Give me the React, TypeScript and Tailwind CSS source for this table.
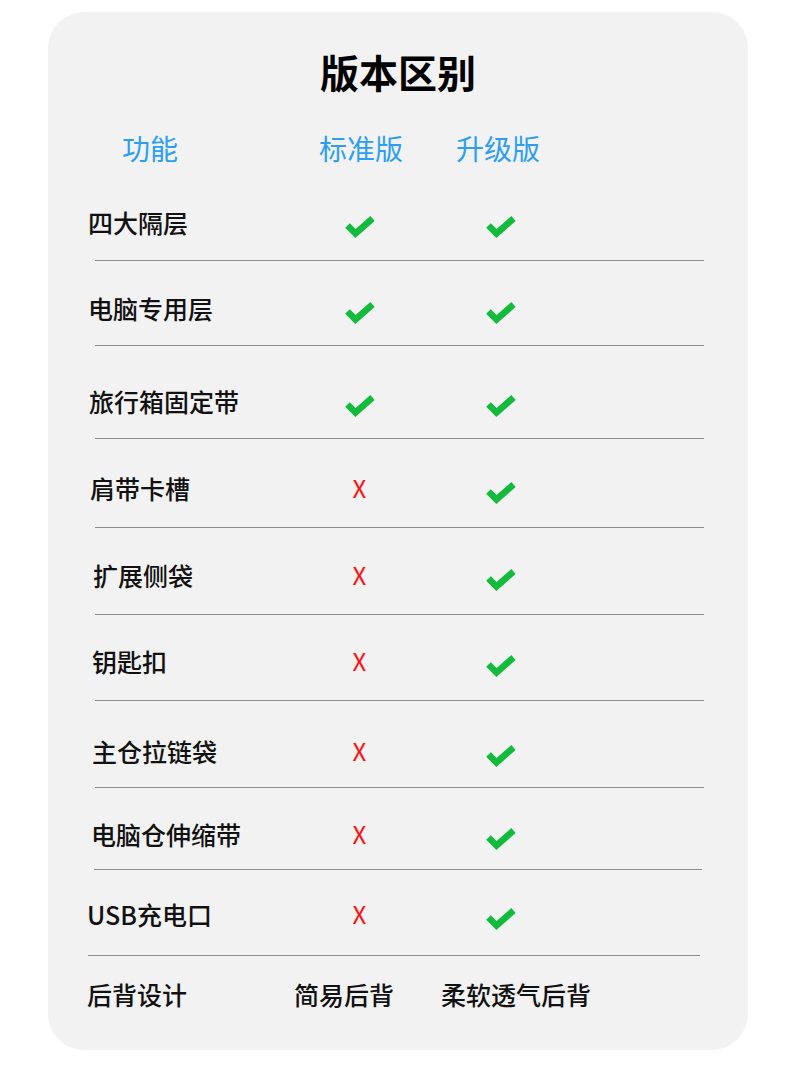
const font = { fontFamily: '"Noto Sans CJK SC", "Noto Sans", sans-serif' };

type Mark = "yes" | "no";

const ROWS: { label: string; std: Mark; up: Mark; pad: string; line: string; indent: string }[] = [
  { label: "四大隔层", std: "yes", up: "yes", pad: "pt-[33px] pb-[23px]", line: "ml-[47px] w-[609px]", indent: "ml-[40px] w-[217px]" },
  { label: "电脑专用层", std: "yes", up: "yes", pad: "pt-[32px] pb-[22px]", line: "ml-[47px] w-[609px]", indent: "ml-[40px] w-[217px]" },
  { label: "旅行箱固定带", std: "yes", up: "yes", pad: "pt-[40px] pb-[22px]", line: "ml-[47px] w-[609px]", indent: "ml-[41px] w-[216px]" },
  { label: "肩带卡槽", std: "no", up: "yes", pad: "pt-[34px] pb-[24px]", line: "ml-[47px] w-[609px]", indent: "ml-[42px] w-[215px]" },
  { label: "扩展侧袋", std: "no", up: "yes", pad: "pt-[32px] pb-[24px]", line: "ml-[47px] w-[609px]", indent: "ml-[45px] w-[212px]" },
  { label: "钥匙扣", std: "no", up: "yes", pad: "pt-[31px] pb-[24px]", line: "ml-[47px] w-[609px]", indent: "ml-[44px] w-[213px]" },
  { label: "主仓拉链袋", std: "no", up: "yes", pad: "pt-[35px] pb-[21px]", line: "ml-[47px] w-[609px]", indent: "ml-[44px] w-[213px]" },
  { label: "电脑仓伸缩带", std: "no", up: "yes", pad: "pt-[31px] pb-[20px]", line: "ml-[46px] w-[608px]", indent: "ml-[43px] w-[214px]" },
  { label: "USB充电口", std: "no", up: "yes", pad: "pt-[29px] pb-[26px]", line: "ml-[40px] w-[612px]", indent: "ml-[39px] w-[218px]" },
];

function Check() {
  return (
    <svg width="30" height="22" viewBox="0 0 30 22" className="mt-[10px] ml-[4px]">
      <polyline
        points="2.5,9.5 10.5,17.5 27.5,2.5"
        fill="none"
        stroke="#12bb3b"
        strokeWidth="6.5"
        strokeLinejoin="miter"
      />
    </svg>
  );
}

function Cell({ mark }: { mark: Mark }) {
  if (mark === "yes") return <Check />;
  return <span className="ml-[3px] text-[24px] leading-[30px] text-[#ff1010]">X</span>;
}

export default function App() {
  return (
    <div className="min-h-[1065px] bg-white pt-[12px]" style={font}>
      <div className="ml-[48px] w-[700px] h-[1038px] rounded-[36px] bg-[#f2f2f2] pt-[35px]">
        <h1 className="text-center text-[39px] leading-[48px] font-bold text-black">版本区别</h1>

        <div className="mt-[35px] flex h-[36px] items-center text-[28px] leading-[36px] text-[#2d9ef2]">
          <span className="ml-[74px]">功能</span>
          <span className="ml-[141px]">标准版</span>
          <span className="ml-[53px]">升级版</span>
        </div>

        <div className="mt-[8px]">
          {ROWS.map((r) => (
            <div key={r.label}>
              <div className={`flex h-[30px] box-content items-center ${r.pad}`}>
                <span className={`text-[25px] leading-[30px] font-medium text-[#111] ${r.indent}`}>
                  {r.label}
                </span>
                <div className="flex w-[106px] justify-center">
                  <Cell mark={r.std} />
                </div>
                <div className="flex w-[176px] justify-center">
                  <Cell mark={r.up} />
                </div>
              </div>
              <div className={`h-px bg-[#8c8c8c] ${r.line}`} />
            </div>
          ))}

          <div className="flex h-[30px] items-center pt-[23px] box-content text-[25px] leading-[30px] font-medium text-[#111]">
            <span className="ml-[39px] w-[207px]">后背设计</span>
            <span>简易后背</span>
            <span className="ml-[47px]">柔软透气后背</span>
          </div>
        </div>
      </div>
    </div>
  );
}
